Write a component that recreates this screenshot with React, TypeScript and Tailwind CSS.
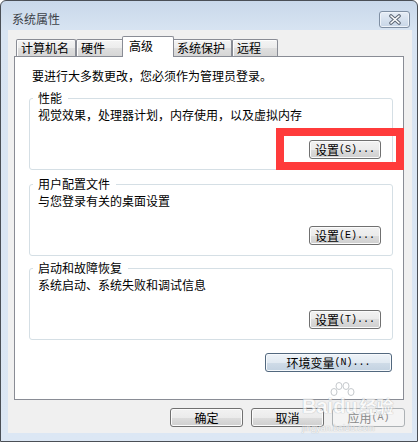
import React from "react";

const btnNormal =
  "border border-[#707070] rounded-[3px] bg-[linear-gradient(to_bottom,#f2f2f2_0%,#ebebeb_50%,#dddddd_50%,#cfcfcf_100%)] shadow-[inset_0_0_0_1px_#fbfbfb] text-black";
const btnHot =
  "border border-[#52687e] rounded-[3px] bg-[linear-gradient(to_bottom,#eef3f8_0%,#e2eaf2_50%,#d0dce8_50%,#c3d2e1_100%)] shadow-[inset_0_0_0_1px_#f6f9fc] text-black";
const btnDisabled =
  "border border-[#adb2b5] rounded-[3px] bg-[#f4f4f4] text-[#8a8a8a]";

function Btn({
  label,
  acc,
  w,
  kind = "normal",
}: {
  label: string;
  acc?: string;
  w: string;
  kind?: "normal" | "hot" | "disabled";
}) {
  const cls = kind === "hot" ? btnHot : kind === "disabled" ? btnDisabled : btnNormal;
  return (
    <div className={`${w} h-[19px] flex items-center justify-center ${cls}`}>
      <span className="leading-[16px]">{label}</span>
      {acc && (
        <span className="font-['Liberation_Mono',monospace] text-[10px] leading-[16px]">{acc}</span>
      )}
    </div>
  );
}

function Group({
  title,
  desc,
  acc,
  className,
}: {
  title: string;
  desc: string;
  acc: string;
  className: string;
}) {
  return (
    <fieldset
      className={`ml-[14px] mr-[10px] border border-[#d5dfe5] rounded-[3px] p-0 pb-[10px] ${className}`}
    >
      <legend className="ml-[3px] pl-[5px] pr-[6px] leading-[16px]">{title}</legend>
      <div className="pl-[8px] pt-[1px] leading-[16px]">{desc}</div>
      <div className="flex justify-end mt-[17px] pr-[11px]">
        <Btn label="设置" acc={acc} w="w-[72px]" />
      </div>
    </fieldset>
  );
}

function Tab({ label, w }: { label: string; w: string }) {
  return (
    <div
      className={`${w} h-[17px] border border-b-0 border-[#898c95] rounded-t-[2px] pl-[4px] leading-[16px] bg-[linear-gradient(to_bottom,#f4f4f4_0%,#ececec_50%,#dfdfdf_50%,#d6d6d6_100%)] shadow-[inset_1px_1px_0_#fdfdfd]`}
    >
      {label}
    </div>
  );
}

export default function App() {
  return (
    <div className="relative w-[420px] h-[442px] bg-white font-['Noto_Sans_CJK_SC',sans-serif] text-[12px] leading-[16px] text-black overflow-hidden">
      <div className="w-[418px] h-[442px] border border-[#4a4f56] rounded-t-[6px] bg-[linear-gradient(to_bottom,#c9d8ea_0px,#d8e4f2_30px,#dce7f4_100%)] flex flex-col pl-[7px] pr-[5px] pb-[8px]">
        {/* title bar */}
        <div className="h-[29px] flex items-end justify-between pl-[4px] pr-[2px] pb-[2px]">
          <span className="mb-[1px] text-[#3c4148] leading-[16px]">系统属性</span>
          <div className="w-[31px] h-[17px] rounded-[3px] border border-[#7f8fa3] bg-[linear-gradient(to_bottom,#e6edf6_0%,#d6e1ee_50%,#c8d6e7_100%)] shadow-[inset_0_0_0_1px_#eef3f9] flex items-center justify-center">
            <svg width="14" height="11" viewBox="0 0 14 11">
              <path d="M3 2 L11 9 M11 2 L3 9" stroke="#5b6675" strokeWidth="3.6" strokeLinecap="round" />
              <path d="M3 2 L11 9 M11 2 L3 9" stroke="#ffffff" strokeWidth="1.6" strokeLinecap="round" />
            </svg>
          </div>
        </div>

        {/* client area */}
        <div className="h-[403px] bg-[#f0f0f0] flex flex-col pt-[6px] pl-[6px] pr-[8px]">
          {/* tabs */}
          <div className="flex items-end h-[20px] pl-[2px]">
            <Tab label="计算机名" w="w-[60px]" />
            <Tab label="硬件" w="w-[48px]" />
            <div className="relative z-10 -mx-[2px] -mb-[1px] w-[52px] h-[21px] border border-b-0 border-[#898c95] rounded-t-[2px] bg-white pl-[6px] pt-[1px] leading-[16px]">
              高级
            </div>
            <Tab label="系统保护" w="w-[60px]" />
            <Tab label="远程" w="w-[46px]" />
          </div>

          {/* panel */}
          <div className="h-[344px] border border-[#898c95] bg-white flex flex-col pt-[11px]">
            <div className="pl-[17px] leading-[16px]">要进行大多数更改，您必须作为管理员登录。</div>
            <Group
              title="性能"
              desc="视觉效果，处理器计划，内存使用，以及虚拟内存"
              acc="(S)..."
              className="mt-[6px]"
            />
            <Group
              title="用户配置文件"
              desc="与您登录有关的桌面设置"
              acc="(E)..."
              className="mt-[6px]"
            />
            <Group
              title="启动和故障恢复"
              desc="系统启动、系统失败和调试信息"
              acc="(T)..."
              className="mt-[4px]"
            />
            <div className="flex justify-end mt-[13px] pr-[11px]">
              <Btn label="环境变量" acc="(N)..." w="w-[127px]" kind="hot" />
            </div>
          </div>

          {/* bottom buttons */}
          <div className="flex justify-end gap-[8px] mt-[8px] -mr-[1px]">
            <Btn label="确定" w="w-[73px]" />
            <Btn label="取消" w="w-[73px]" />
            <Btn label="应用" acc="(A)" w="w-[73px]" kind="disabled" />
          </div>
        </div>
      </div>

      {/* red highlight */}
      <div className="absolute left-[276px] top-[128px] w-[128px] h-[42px] border-[8px] border-[#ff3b3b]" />

      {/* watermark */}
      <div className="absolute left-[302px] top-[395px] pointer-events-none flex flex-col opacity-60">
        <div className="flex items-end font-['Liberation_Sans',sans-serif] font-bold text-[20px] leading-[22px] text-white [text-shadow:0_0_1px_#9aa0a6,0_0_1px_#9aa0a6]">
          <span>Bai</span>
          <span className="relative">
            <svg className="absolute -top-[14px] left-[-6px]" width="30" height="22" viewBox="0 0 30 22">
              <g fill="#ffffff" stroke="#a0a6ac" strokeWidth="1">
                <ellipse cx="7" cy="11" rx="3" ry="3.5" />
                <ellipse cx="12" cy="5" rx="3" ry="3.5" />
                <ellipse cx="19" cy="5" rx="3" ry="3.5" />
                <ellipse cx="24" cy="11" rx="3" ry="3.5" />
              </g>
            </svg>
            du
          </span>
          <span className="ml-[2px] font-['Noto_Sans_CJK_SC',sans-serif] text-[17px] leading-[22px]">经验</span>
        </div>
        <div className="mt-[6px] font-['Liberation_Sans',sans-serif] text-[9px] leading-[10px] text-white [text-shadow:0_0_1px_#9aa0a6,0_0_1px_#9aa0a6]">
          jingyan.baidu.com
        </div>
      </div>
    </div>
  );
}
